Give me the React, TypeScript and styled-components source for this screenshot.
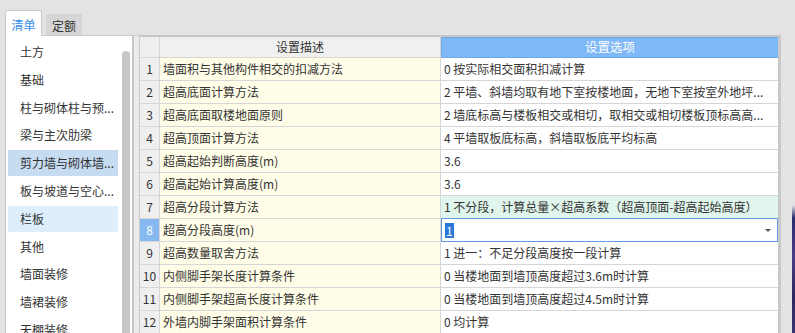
import React from "react";
import styled, { createGlobalStyle, css } from "styled-components";

const GlobalStyle = createGlobalStyle`
  html, body {
    margin: 0;
    padding: 0;
    background: #e3e3e3;
    overflow: hidden;
  }
  body {
    font-family: "Noto Sans CJK SC", "Noto Sans", sans-serif;
    font-size: 12px;
    color: #333;
  }
  * { box-sizing: border-box; }
`;

const Page = styled.div`
  width: 795px;
  height: 333px;
  display: flex;
  flex-direction: column;
  padding: 10px 0 0 5px;
  overflow: hidden;
`;

const TabBar = styled.div`
  display: flex;
  align-items: flex-end;
  height: 25px;
  gap: 4px;
`;

const Tab = styled.div<{ $active?: boolean }>`
  display: flex;
  align-items: center;
  justify-content: center;
  line-height: 1;
  ${(p) =>
    p.$active
      ? css`
          width: 37px;
          height: 25px;
          background: #fff;
          border: 1px solid #c9c9c9;
          border-bottom: none;
          border-radius: 3px 3px 0 0;
          color: #3a8ee6;
          padding-top: 2px;
          position: relative;
          z-index: 1;
          margin-bottom: -1px;
          height: 26px;
        `
      : css`
          width: 36px;
          height: 21px;
          background: #d6d6d6;
          color: #333;
          padding-top: 2px;
        `}
`;

const Main = styled.div`
  flex: 1;
  display: flex;
  min-height: 0;
`;

const LeftPanel = styled.div`
  width: 129px;
  display: flex;
  background: #fff;
  border-left: 1px solid #c9c9c9;
  border-top: 1px solid #c9c9c9;
  border-right: 2px solid #c6c6c6;
`;

const List = styled.div`
  width: 116px;
  padding: 3px 4px 0 2px;
  display: flex;
  flex-direction: column;
`;

const ListItem = styled.div<{ $state?: "selected" | "hover" }>`
  flex: none;
  height: 26px;
  margin-bottom: 1.8px;
  line-height: 26px;
  padding-left: 12px;
  white-space: nowrap;
  overflow: hidden;
  color: #333;
  background: ${(p) =>
    p.$state === "selected" ? "#c6dcf1" : p.$state === "hover" ? "#ddeefd" : "transparent"};
`;

const ScrollTrack = styled.div`
  width: 10px;
  padding-top: 15px;
  display: flex;
  flex-direction: column;
`;

const ScrollThumb = styled.div`
  width: 8px;
  flex: 1;
  background: #c6c6c6;
  border-radius: 4px 4px 0 0;
`;

const Splitter = styled.div`
  width: 5px;
  background: #ececec;
  border-top: 1px solid #d2d2d2;
`;

const TablePanel = styled.div`
  width: 642px;
  display: flex;
  flex-direction: column;
  background: #fff;
  border-left: 1px solid #c8c8c8;
  border-top: 2px solid #c6c6c6;
  border-right: 3px solid #c8c8c8;
`;

const Row = styled.div<{ $header?: boolean }>`
  display: grid;
  grid-template-columns: 20px 281px 337px;
  height: ${(p) => (p.$header ? 21 : 23)}px;
  flex: none;
`;

type CellKind = "num" | "numActive" | "desc" | "opt" | "optGreen" | "hNum" | "hDesc" | "hOpt";

const cellBg: Record<CellKind, string> = {
  num: "#efefef",
  numActive: "#86b9f1",
  desc: "#fffde7",
  opt: "#ffffff",
  optGreen: "#e0f5eb",
  hNum: "#efefef",
  hDesc: "#f0f0f0",
  hOpt: "#7fb8f6",
};

const Cell = styled.div<{ $kind: CellKind }>`
  background: ${(p) => cellBg[p.$kind]};
  border-right: 1px solid #d6d6d6;
  border-bottom: 1px solid #d6d6d6;
  display: flex;
  align-items: center;
  white-space: nowrap;
  overflow: hidden;
  line-height: 1;
  padding-left: ${(p) => (p.$kind === "desc" ? 3 : p.$kind === "opt" || p.$kind === "optGreen" ? 3 : 0)}px;
  justify-content: ${(p) =>
    p.$kind === "num" || p.$kind === "numActive" || p.$kind.startsWith("h") ? "center" : "flex-start"};
  color: ${(p) => (p.$kind === "numActive" || p.$kind === "hOpt" ? "#fff" : "#333")};
  ${(p) =>
    p.$kind === "hOpt" &&
    css`
      border: 1px solid #6ea9ec;
      border-right: none;
      font-size: 12.5px;
    `}
  ${(p) =>
    (p.$kind === "opt" || p.$kind === "optGreen" || p.$kind === "hOpt") &&
    css`
      border-right: none;
    `}
`;

const Editor = styled.div`
  height: 24px;
  margin-top: -1px;
  border: 1px solid #5e9de4;
  background: #fff;
  display: flex;
  align-items: center;
  justify-content: space-between;
  padding: 0 6px 0 3px;
`;

const Selected = styled.span`
  background: #2c77d7;
  color: #fff;
  line-height: 15px;
  padding: 0 1px;
`;

const DropArrow = styled.span`
  width: 0;
  height: 0;
  border-left: 3px solid transparent;
  border-right: 3px solid transparent;
  border-top: 3px solid #555;
`;

const Spacer = styled.div`
  flex: 1;
`;

const EdgeStrip = styled.div`
  width: 3px;
  margin-top: 170px;
  background: linear-gradient(180deg, #e3e3e3 0%, #2b2d6e 10%, #4b3c86 40%, #2d2a60 70%, #3a3470 100%);
`;

const listItems: { label: string; state?: "selected" | "hover" }[] = [
  { label: "土方" },
  { label: "基础" },
  { label: "柱与砌体柱与预..." },
  { label: "梁与主次肋梁" },
  { label: "剪力墙与砌体墙...", state: "selected" },
  { label: "板与坡道与空心..." },
  { label: "栏板", state: "hover" },
  { label: "其他" },
  { label: "墙面装修" },
  { label: "墙裙装修" },
  { label: "天棚装修" },
];

const rows: { desc: string; opt: string; green?: boolean; editing?: boolean }[] = [
  { desc: "墙面积与其他构件相交的扣减方法", opt: "0 按实际相交面积扣减计算" },
  { desc: "超高底面计算方法", opt: "2 平墙、斜墙均取有地下室按楼地面，无地下室按室外地坪..." },
  { desc: "超高底面取楼地面原则", opt: "2 墙底标高与楼板相交或相切，取相交或相切楼板顶标高高..." },
  { desc: "超高顶面计算方法", opt: "4 平墙取板底标高，斜墙取板底平均标高" },
  { desc: "超高起始判断高度(m)", opt: "3.6" },
  { desc: "超高起始计算高度(m)", opt: "3.6" },
  { desc: "超高分段计算方法", opt: "1 不分段，计算总量×超高系数（超高顶面-超高起始高度）", green: true },
  { desc: "超高分段高度(m)", opt: "1", editing: true },
  { desc: "超高数量取舍方法", opt: "1 进一：不足分段高度按一段计算" },
  { desc: "内侧脚手架长度计算条件", opt: "0 当楼地面到墙顶高度超过3.6m时计算" },
  { desc: "内侧脚手架超高长度计算条件", opt: "0 当楼地面到墙顶高度超过4.5m时计算" },
  { desc: "外墙内脚手架面积计算条件", opt: "0 均计算" },
];

export default function App() {
  return (
    <>
      <GlobalStyle />
      <Page>
        <TabBar>
          <Tab $active>清单</Tab>
          <Tab>定额</Tab>
        </TabBar>
        <Main>
          <LeftPanel>
            <List>
              {listItems.map((it) => (
                <ListItem key={it.label} $state={it.state}>
                  {it.label}
                </ListItem>
              ))}
            </List>
            <ScrollTrack>
              <ScrollThumb />
            </ScrollTrack>
          </LeftPanel>
          <Splitter />
          <TablePanel>
            <Row $header>
              <Cell $kind="hNum" />
              <Cell $kind="hDesc">设置描述</Cell>
              <Cell $kind="hOpt">设置选项</Cell>
            </Row>
            {rows.map((r, i) => (
              <Row key={i}>
                <Cell $kind={r.editing ? "numActive" : "num"}>{i + 1}</Cell>
                <Cell $kind="desc">{r.desc}</Cell>
                {r.editing ? (
                  <Editor>
                    <Selected>{r.opt}</Selected>
                    <DropArrow />
                  </Editor>
                ) : (
                  <Cell $kind={r.green ? "optGreen" : "opt"}>{r.opt}</Cell>
                )}
              </Row>
            ))}
          </TablePanel>
          <Spacer />
          <EdgeStrip />
        </Main>
      </Page>
    </>
  );
}
